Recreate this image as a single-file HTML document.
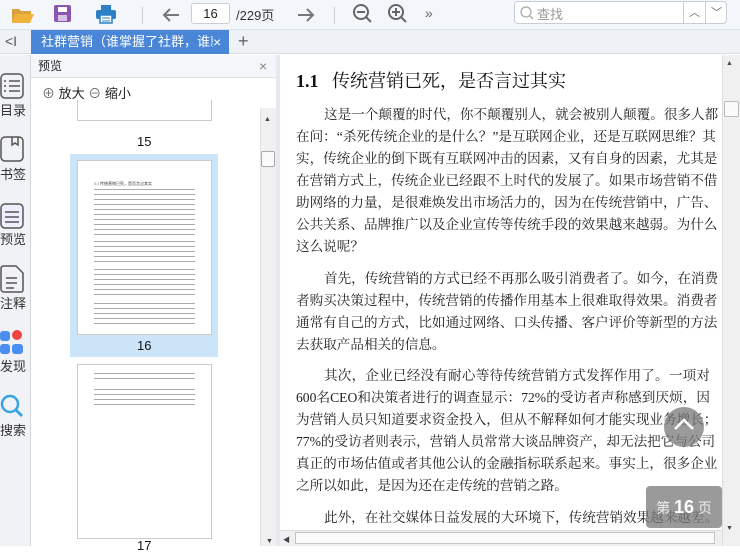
<!DOCTYPE html>
<html><head><meta charset="utf-8"><style>
*{margin:0;padding:0;box-sizing:border-box}
body{width:740px;height:546px;overflow:hidden;background:#fff;font-family:"Liberation Sans","Noto Sans CJK SC",sans-serif;position:relative}
.abs{position:absolute}
#tb{left:0;top:0;width:740px;height:30px;background:#f3f6fa;border-bottom:1px solid #dde3ea}
#tabs{left:0;top:30px;width:740px;height:24px;background:#eef2f7;border-bottom:1px solid #d6dde5}
#tab{left:31px;top:30px;width:182px;height:24px;background:#4a86d8;color:#fff;font-size:13px;line-height:24px;padding-left:10px;white-space:nowrap;overflow:hidden}
#rail{left:0;top:55px;width:31px;height:491px;background:#f0f2f5;border-right:1px solid #d2d7de}
.ri{position:absolute;left:0;width:31px;font-size:13px;color:#333;text-align:left}
#pv{left:31px;top:55px;width:245px;height:491px;background:#fff}
#pvh{left:31px;top:55px;width:245px;height:23px;background:#f4f6f9;border-bottom:1px solid #dde2e8;font-size:12px;line-height:23px;padding-left:7px;color:#222}
#vs1{left:260px;top:108px;width:16px;height:438px;background:#f0f0f0;border-left:1px solid #e2e2e2}
#sep{left:276px;top:55px;width:4px;height:491px;background:#e6e9ee}
#doc{left:280px;top:55px;width:442px;height:491px;background:#fff}
#vs2{left:722px;top:55px;width:18px;height:491px;background:#f0f0f0;border-left:1px solid #ddd}
.p{position:absolute;left:296px;width:414px;font-family:"Liberation Serif","Noto Serif CJK SC",serif;font-size:13.6px;line-height:22px;color:#222}
.p div{text-align:justify;text-align-last:justify;white-space:nowrap;height:22px}
.p div.l{text-align-last:left}
.p div.i{padding-left:28px}
.pg{position:absolute;left:77px;width:135px;border:1px solid #ccc;background:#fff}
</style></head><body>
<div id="tb" class="abs"></div>
<svg class="abs" style="left:10px;top:5px" width="26" height="20"><path d="M2 4h7l2 2h10v3H6L2 18z" fill="#d9a23a"/><path d="M6 9h18l-4 9H2z" fill="#f0b43c"/></svg>
<svg class="abs" style="left:53px;top:4px" width="20" height="20"><rect x="1" y="1" width="17" height="17" rx="2" fill="#8b56b0"/><rect x="5" y="3" width="9" height="5" fill="#fff"/><rect x="5" y="11" width="9" height="6" fill="#d7c2e6"/></svg>
<svg class="abs" style="left:95px;top:3px" width="22" height="22"><rect x="6" y="2" width="10" height="6" fill="#2d7fc8"/><rect x="1" y="7" width="20" height="9" rx="2" fill="#2d7fc8"/><rect x="5" y="12" width="12" height="8" fill="#fff" stroke="#2d7fc8" stroke-width="1.5"/><line x1="7" y1="15" x2="15" y2="15" stroke="#2d7fc8"/><line x1="7" y1="18" x2="15" y2="18" stroke="#2d7fc8"/></svg>
<div class="abs" style="left:142px;top:7px;width:1px;height:17px;background:#ccc"></div>
<svg class="abs" style="left:160px;top:4px" width="22" height="22"><path d="M19 11H4M10 5l-6 6 6 6" fill="none" stroke="#777" stroke-width="2"/></svg>
<div class="abs" style="left:191px;top:3px;width:39px;height:21px;border:1px solid #c8ced6;border-radius:3px;background:#fff;font-size:13px;line-height:19px;text-align:center;color:#222">16</div>
<div class="abs" style="left:236px;top:5px;font-size:13px;color:#333">/229页</div>
<svg class="abs" style="left:295px;top:4px" width="22" height="22"><path d="M3 11h15M12 5l6 6-6 6" fill="none" stroke="#777" stroke-width="2"/></svg>
<div class="abs" style="left:334px;top:7px;width:1px;height:17px;background:#ccc"></div>
<svg class="abs" style="left:352px;top:3px" width="22" height="22"><circle cx="9" cy="9" r="7" fill="none" stroke="#666" stroke-width="2"/><path d="M5 9h8M14 14l5 5" stroke="#666" stroke-width="2"/></svg>
<svg class="abs" style="left:387px;top:3px" width="22" height="22"><circle cx="9" cy="9" r="7" fill="none" stroke="#666" stroke-width="2"/><path d="M5 9h8M9 5v8M14 14l5 5" stroke="#666" stroke-width="2"/></svg>
<div class="abs" style="left:425px;top:5px;font-size:14px;color:#666">»</div>
<div class="abs" style="left:514px;top:1px;width:213px;height:23px;border:1px solid #c8ced6;border-radius:4px;background:#fff"></div>
<svg class="abs" style="left:519px;top:5px" width="16" height="16"><circle cx="7" cy="7" r="5" fill="none" stroke="#aaa" stroke-width="1.3"/><path d="M11 11l3 3" stroke="#aaa" stroke-width="1.3"/></svg>
<div class="abs" style="left:537px;top:4px;font-size:13px;color:#999">查找</div>
<div class="abs" style="left:683px;top:1px;width:1px;height:23px;background:#c8ced6"></div>
<div class="abs" style="left:705px;top:1px;width:1px;height:23px;background:#c8ced6"></div>
<div class="abs" style="left:689px;top:4px;font-size:11px;color:#666">︿</div>
<div class="abs" style="left:711px;top:4px;font-size:11px;color:#666">﹀</div>

<div id="tabs" class="abs"></div>
<div class="abs" style="left:5px;top:33px;font-size:14px;color:#555">&lt;I</div>
<div id="tab" class="abs">社群营销（谁掌握了社群，谁就</div>
<div class="abs" style="left:213px;top:30px;width:16px;height:24px;background:#4a86d8;color:#fff;font-size:14px;line-height:24px">×</div>
<div class="abs" style="left:238px;top:31px;font-size:18px;color:#666">+</div>

<div id="rail" class="abs"></div>
<svg class="abs" style="left:0;top:73px" width="24" height="26"><rect x="1" y="1" width="22" height="24" rx="4" fill="none" stroke="#555" stroke-width="1.5"/><path d="M4 8h2M9 8h11M4 13h2M9 13h11M4 18h2M9 18h11" stroke="#555" stroke-width="1.6"/></svg>
<div class="ri" style="top:100px">目录</div>
<svg class="abs" style="left:0;top:136px" width="24" height="26"><rect x="1" y="1" width="22" height="24" rx="4" fill="none" stroke="#555" stroke-width="1.5"/><path d="M12 1v8l3-2 3 2V1" fill="none" stroke="#555" stroke-width="1.5"/></svg>
<div class="ri" style="top:164px">书签</div>
<svg class="abs" style="left:0;top:201px" width="26" height="28"><rect x="1" y="3" width="22" height="24" rx="4" fill="#eef" stroke="#555" stroke-width="1.5"/><path d="M5 11h14M5 16h14M5 21h14" stroke="#555" stroke-width="1.6"/></svg>
<div class="ri" style="top:229px">预览</div>
<svg class="abs" style="left:0;top:265px" width="24" height="28"><path d="M1 3a3 3 0 0 1 3-2h12l7 7v17a2 2 0 0 1-2 2H4a3 3 0 0 1-3-3z" fill="none" stroke="#555" stroke-width="1.5"/><path d="M6 13h11M6 18h11M6 23h8" stroke="#555" stroke-width="1.5"/></svg>
<div class="ri" style="top:293px">注释</div>
<svg class="abs" style="left:0;top:330px" width="24" height="26"><rect x="0" y="1" width="10" height="10" rx="3" fill="#4a8ef0"/><circle cx="17" cy="5" r="5" fill="#f04444"/><rect x="0" y="14" width="10" height="10" rx="3" fill="#4a8ef0"/><rect x="12" y="14" width="11" height="10" rx="3" fill="#4a8ef0"/></svg>
<div class="ri" style="top:356px">发现</div>
<svg class="abs" style="left:0;top:394px" width="24" height="26"><circle cx="10" cy="10" r="8" fill="none" stroke="#3aa3e0" stroke-width="2.5"/><path d="M16 16l6 6" stroke="#3aa3e0" stroke-width="3"/></svg>
<div class="ri" style="top:420px">搜索</div>

<div id="pv" class="abs"></div>
<div id="pvh" class="abs">预览</div>
<div class="abs" style="left:259px;top:58px;font-size:14px;color:#888">×</div>
<div class="abs" style="left:31px;top:79px;width:245px;height:29px;font-size:13px;line-height:29px;padding-left:11px;color:#222">
<span style="color:#666">⊕</span> 放大 <span style="color:#666">⊖</span> 缩小</div>
<div id="vs1" class="abs"></div>
<div class="abs" style="left:264px;top:116px;font-size:7px;color:#444">▲</div>
<div class="abs" style="left:261px;top:151px;width:14px;height:16px;background:#fafafa;border:1px solid #aaa;border-radius:2px"></div>
<div class="abs" style="left:266px;top:538px;font-size:7px;color:#444">▼</div>

<div class="pg" style="top:100px;height:21px;border-top:none"></div>
<div class="abs" style="left:137px;top:134px;font-size:13px;color:#111">15</div>
<div class="abs" style="left:70px;top:154px;width:148px;height:203px;background:#cce4f7"></div>
<div class="pg" style="top:160px;height:175px;padding:20px 16px 0 16px">
<div style="font-size:4px;height:6px;color:#333;font-family:serif">1.1 传统营销已死，是否言过其实</div>
<div style="height:48px;background:repeating-linear-gradient(#fff 0 2px,#aaa 2px 3px,#fff 3px 5px)"></div>
<div style="height:4px"></div>
<div style="height:24px;background:repeating-linear-gradient(#fff 0 2px,#aaa 2px 3px,#fff 3px 5px)"></div>
<div style="height:4px"></div>
<div style="height:30px;background:repeating-linear-gradient(#fff 0 2px,#aaa 2px 3px,#fff 3px 5px)"></div>
<div style="height:4px"></div>
<div style="height:24px;background:repeating-linear-gradient(#fff 0 2px,#aaa 2px 3px,#fff 3px 5px)"></div>
</div>
<div class="abs" style="left:137px;top:338px;font-size:13px;color:#111">16</div>
<div class="pg" style="top:364px;height:175px;padding:6px 16px 0 16px">
<div style="height:12px;background:repeating-linear-gradient(#fff 0 2px,#aaa 2px 3px,#fff 3px 5px)"></div>
<div style="height:4px"></div>
<div style="height:20px;background:repeating-linear-gradient(#fff 0 2px,#aaa 2px 3px,#fff 3px 5px)"></div>
</div>
<div class="abs" style="left:137px;top:538px;font-size:13px;color:#111">17</div>

<div id="sep" class="abs"></div>
<div id="doc" class="abs"></div>
<div class="abs" style="left:296px;top:67px;font-family:'Liberation Serif','Noto Serif CJK SC',serif;font-size:18px;color:#111"><b>1.1</b>&nbsp;&nbsp;&nbsp;传统营销已死，是否言过其实</div>
<div class="p" style="top:104px">
<div class="i">这是一个颠覆的时代，你不颠覆别人，就会被别人颠覆。很多人都</div>
<div>在问：“杀死传统企业的是什么？”是互联网企业，还是互联网思维？其</div>
<div>实，传统企业的倒下既有互联网冲击的因素，又有自身的因素，尤其是</div>
<div>在营销方式上，传统企业已经跟不上时代的发展了。如果市场营销不借</div>
<div>助网络的力量，是很难焕发出市场活力的，因为在传统营销中，广告、</div>
<div>公共关系、品牌推广以及企业宣传等传统手段的效果越来越弱。为什么</div>
<div class="l">这么说呢？</div>
</div>
<div class="p" style="top:268px">
<div class="i">首先，传统营销的方式已经不再那么吸引消费者了。如今，在消费</div>
<div>者购买决策过程中，传统营销的传播作用基本上很难取得效果。消费者</div>
<div>通常有自己的方式，比如通过网络、口头传播、客户评价等新型的方法</div>
<div class="l">去获取产品相关的信息。</div>
</div>
<div class="p" style="top:365px">
<div class="i">其次，企业已经没有耐心等待传统营销方式发挥作用了。一项对</div>
<div>600名CEO和决策者进行的调查显示：72%的受访者声称感到厌烦，因</div>
<div>为营销人员只知道要求资金投入，但从不解释如何才能实现业务增长；</div>
<div>77%的受访者则表示，营销人员常常大谈品牌资产，却无法把它与公司</div>
<div>真正的市场估值或者其他公认的金融指标联系起来。事实上，很多企业</div>
<div class="l">之所以如此，是因为还在走传统的营销之路。</div>
</div>
<div class="p" style="top:507px">
<div class="i l">此外，在社交媒体日益发展的大环境下，传统营销效果越来越差。</div>
</div>
<div class="abs" style="left:280px;top:530px;width:442px;height:16px;background:#f0f0f0;border-top:1px solid #ddd"></div>
<div class="abs" style="left:283px;top:535px;font-size:7px;color:#444">◀</div>
<div class="abs" style="left:295px;top:532px;width:420px;height:12px;background:#fafafa;border:1px solid #c4c4c4"></div>
<div class="abs" style="left:664px;top:407px;width:40px;height:40px;border-radius:50%;background:rgba(120,120,120,0.75)"></div>
<svg class="abs" style="left:672px;top:414px" width="24" height="20"><path d="M3 15l9-9 9 9" fill="none" stroke="#fff" stroke-width="2.5"/></svg>
<div class="abs" style="left:646px;top:486px;width:76px;height:42px;border-radius:4px;background:rgba(120,120,120,0.75);color:#eee;font-size:14px;line-height:42px;text-align:center">第 <b style="font-size:18px;color:#fff">16</b> 页</div>
<div id="vs2" class="abs"></div>
<div class="abs" style="left:726px;top:60px;font-size:7px;color:#444">▲</div>
<div class="abs" style="left:724px;top:101px;width:15px;height:16px;background:#fafafa;border:1px solid #bbb;border-radius:2px"></div>
<div class="abs" style="left:726px;top:525px;font-size:7px;color:#444">▼</div>
</body></html>
